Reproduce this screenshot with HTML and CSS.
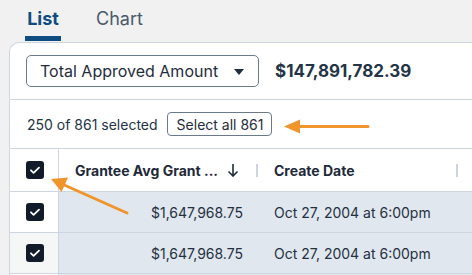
FILE: index.html
```html
<!DOCTYPE html>
<html lang="en">
<head>
    <meta charset="UTF-8">
    <meta name="viewport" content="width=device-width, initial-scale=1.0">
    <title>Grants List</title>
    <link rel="stylesheet" href="styles.css">
</head>
<body>
    <nav class="tabs">
        <a class="tab active">List</a>
        <a class="tab">Chart</a>
    </nav>

    <div class="card">
        <div class="summary">
            <button class="metric-select">
                <span>Total Approved Amount</span>
                <svg class="caret" width="10" height="6" viewBox="0 0 10 6"><path d="M0 0h10L5 6z" fill="#1f2d3d"/></svg>
            </button>
            <span class="total">$147,891,782.39</span>
        </div>

        <div class="selection">
            <span>250 of 861 selected</span>
            <button class="select-all">Select all 861</button>
        </div>

        <div class="grid">
            <div class="row head">
                <div class="cell check"><span class="box"></span></div>
                <div class="cell col-amount">
                    <span class="label">Grantee Avg Grant ...</span>
                    <svg class="sort" width="12" height="14" viewBox="0 0 12 14"><path d="M6 1v12M1.5 8.5L6 13l4.5-4.5" fill="none" stroke="#1f2d3d" stroke-width="1.6"/></svg>
                    <span class="sep"></span>
                </div>
                <div class="cell col-date">
                    <span class="label">Create Date</span>
                    <span class="sep"></span>
                </div>
                <div class="cell"></div>
            </div>
            <div class="row">
                <div class="cell check"><span class="box"></span></div>
                <div class="cell col-amount num">$1,647,968.75</div>
                <div class="cell col-date">Oct 27, 2004 at 6:00pm</div>
                <div class="cell"></div>
            </div>
            <div class="row hover">
                <div class="cell check"><span class="box"></span></div>
                <div class="cell col-amount num">$1,647,968.75</div>
                <div class="cell col-date">Oct 27, 2004 at 6:00pm</div>
                <div class="cell"></div>
            </div>
            <div class="row">
                <div class="cell check"></div>
                <div class="cell col-amount"></div>
                <div class="cell col-date"></div>
                <div class="cell"></div>
            </div>
        </div>
    </div>

    <!-- annotation arrows -->
    <svg class="annotations" width="472" height="275" viewBox="0 0 472 275">
        <g stroke="#f0952c" stroke-width="3" fill="#f0952c" stroke-linecap="round">
            <line x1="368" y1="126.5" x2="296" y2="126.5"/>
            <path d="M284 126.5L300 119.5V133.5z" stroke="none"/>
            <line x1="127" y1="213" x2="62" y2="184"/>
            <path d="M51 179L68 177.5L61.5 192z" stroke="none"/>
        </g>
    </svg>
</body>
</html>
```

FILE: styles.css
```css
body {
    margin: 0;
    background: #f1f1f1;
    font-family: Inter, "Noto Sans", sans-serif;
    color: #1f2d3d;
    height: 275px;
    overflow: hidden;
    position: relative;
}

.tabs {
    display: flex;
    gap: 35px;
    padding: 0 0 0 25px;
    height: 42px;
}

.tab {
    font-size: 18px;
    color: #4a5a6b;
    padding-top: 8px;
    box-sizing: border-box;
    height: 41px;
}

.tab.active {
    color: #0f4c81;
    font-weight: 700;
    width: 36px;
    text-align: center;
    border-bottom: 5px solid #0f4c81;
}

.card {
    margin-left: 9px;
    background: #fff;
    border: 1px solid #cdd6e0;
    border-right: none;
    border-radius: 10px 0 0 0;
}

.summary {
    display: flex;
    align-items: center;
    gap: 16px;
    padding: 12px 16px;
    border-bottom: 1px solid #cdd6e0;
}

.metric-select {
    display: flex;
    align-items: center;
    justify-content: space-between;
    width: 233px;
    height: 32px;
    padding: 0 14px 0 13px;
    background: #fff;
    border: 1px solid #6b7a8a;
    border-radius: 5px;
    font-family: inherit;
    font-size: 16px;
    color: #1f2d3d;
}

.caret {
    margin-top: 1px;
}

.total {
    font-size: 17px;
    font-weight: 700;
    color: #243447;
}

.selection {
    display: flex;
    align-items: center;
    gap: 9px;
    padding: 12px 16px 12px 17px;
    font-size: 14px;
    color: #243447;
    border-bottom: 1px solid #cdd6e0;
}

.select-all {
    height: 24px;
    padding: 0 8px 0 9px;
    background: #fff;
    border: 1px solid #6b7a8a;
    border-radius: 4px;
    font-family: inherit;
    font-size: 14px;
    color: #1f2d3d;
}

.row {
    display: grid;
    grid-template-columns: 49px 199px 200px 1fr;
    height: 40px;
    border-bottom: 1px solid #cdd6e0;
    font-size: 14px;
    color: #243040;
}

.row.head {
    height: 42px;
    font-weight: 700;
    color: #1f2a3a;
}

.cell {
    display: flex;
    align-items: center;
    background: #e1e7ef;
    padding: 0 16px;
    position: relative;
}

.head .cell {
    background: #fff;
}

.cell.check {
    justify-content: center;
    padding: 0;
    background: #fff;
    border-right: 1px solid #cdd6e0;
}

.row.hover .cell.check {
    background: #f5f6f6;
}

.box {
    width: 18px;
    height: 18px;
    border-radius: 3px;
    background: #111b29 url("data:image/svg+xml;utf8,<svg xmlns='http://www.w3.org/2000/svg' width='18' height='18'><path d='M5 9.3l2.6 2.5L13 6.6' fill='none' stroke='white' stroke-width='1.8' stroke-linecap='round' stroke-linejoin='round'/></svg>") center no-repeat;
    margin-left: 2px;
}

.col-amount.num {
    justify-content: flex-end;
    padding-right: 15px;
}

.head .col-amount {
    padding-right: 0;
}

.sort {
    margin-left: 9px;
}

.sep {
    position: absolute;
    right: 0;
    top: 15px;
    width: 2px;
    height: 13px;
    background: #cdd6e0;
}

.annotations {
    position: absolute;
    left: 0;
    top: 0;
    pointer-events: none;
}
```
